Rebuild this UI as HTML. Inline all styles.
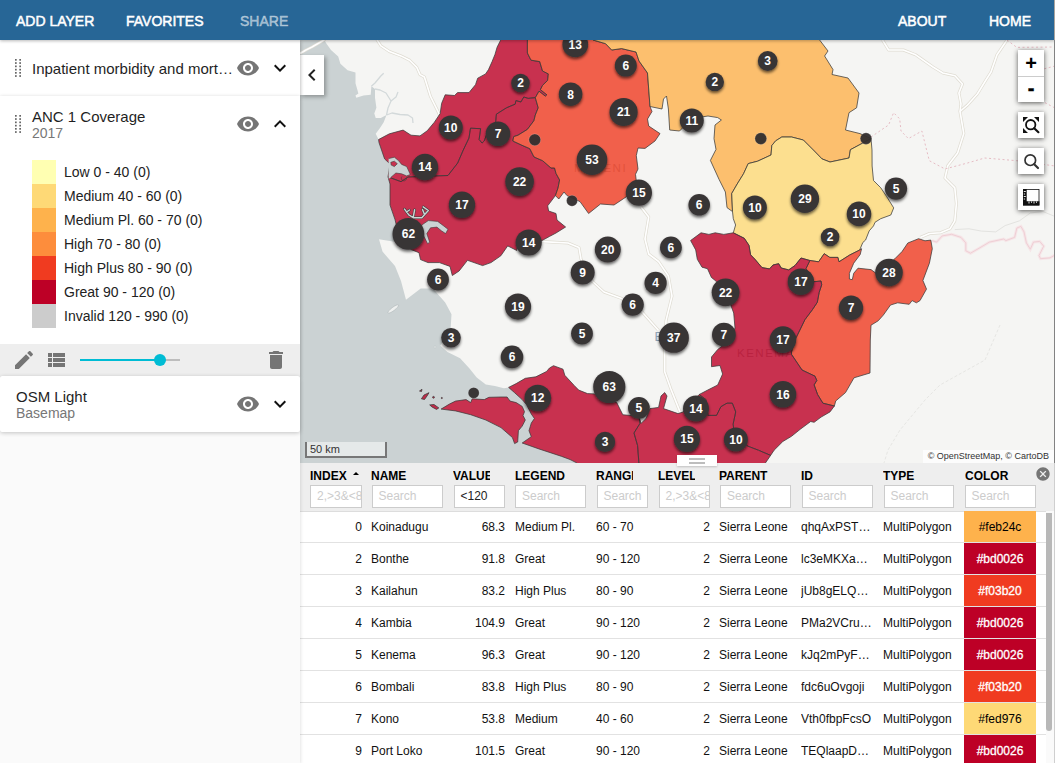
<!DOCTYPE html>
<html lang="en">
<head>
<meta charset="utf-8">
<title>Maps</title>
<style>
html,body{margin:0;padding:0}
body{width:1055px;height:763px;overflow:hidden;position:relative;background:#fafafa;font-family:"Liberation Sans",sans-serif;color:#212121}
#hdr{position:absolute;left:0;top:0;width:1055px;height:40px;background:#276696;z-index:30;box-shadow:0 1px 3px rgba(0,0,0,.28)}
#hdr span{position:absolute;top:0;line-height:42px;font-size:14px;color:#fff;white-space:nowrap;-webkit-text-stroke:.5px currentColor}
#panel{position:absolute;left:0;top:40px;width:300px;height:723px;background:#fafafa;z-index:20;box-shadow:0 1px 4px rgba(0,0,0,.16)}
.card{position:absolute;left:0;width:300px;background:#fff;box-shadow:0 1px 4px rgba(0,0,0,.22)}
.card .t{position:absolute;left:32px;font-size:15px;white-space:nowrap;color:#1f1f1f}
.card .s{position:absolute;left:32px;font-size:14px;color:#777;white-space:nowrap}
.ic{position:absolute;width:24px;height:24px}
.grip{position:absolute;left:15px;width:7px}
.grip i{position:absolute;width:2px;height:2px;background:#8a8a8a}
.lg{position:absolute;left:32px;width:24px;height:24px}
.lt{position:absolute;left:64px;font-size:14px;line-height:24px;white-space:nowrap;color:#222}
#tb{position:absolute;left:0;top:248px;width:300px;height:32px;background:#eee}
#toggle{position:absolute;left:300px;top:55px;width:24px;height:40px;background:#fff;z-index:19;box-shadow:2px 2px 4px rgba(0,0,0,.3)}
#mapwrap{position:absolute;left:300px;top:40px;width:755px;height:423px;overflow:hidden;background:#f5f5f3}
#map{position:absolute;left:0;top:0}
.lbar{position:absolute;left:718px;width:26px;background:#fff;box-shadow:0 1px 5px rgba(0,0,0,.65)}
.lbar b{position:absolute;left:0;width:26px;height:26px;line-height:26px;text-align:center;font:bold 20px "Liberation Sans",sans-serif;color:#000}
#scale{position:absolute;left:5px;top:402px;width:75px;height:14px;border:2px solid #777;border-top:none;background:rgba(255,255,255,.5);font-size:11px;line-height:14px;padding-left:3px;color:#333;box-sizing:content-box}
#attr{position:absolute;right:1px;top:410px;height:13px;padding:0 5px;background:rgba(255,255,255,.7);font-size:9px;line-height:13px;color:#333;white-space:nowrap}
#handle{position:absolute;left:677px;top:455px;width:40px;height:11px;background:#fff;z-index:12;box-shadow:0 1px 2px rgba(0,0,0,.2)}
#handle i{position:absolute;left:12px;width:16px;height:2px;background:#bdbdbd}
#dt{position:absolute;left:300px;top:463px;width:755px;height:300px;background:#fff;overflow:hidden;z-index:10}
#dth{position:absolute;left:0;top:0;width:755px;height:48px;background:#eee;border-bottom:1px solid #ddd}
.hl{position:absolute;top:6px;height:14px;line-height:14px;font-size:12px;font-weight:bold;color:#000;overflow:hidden;white-space:nowrap}
.sa{position:absolute;top:9px;width:0;height:0;border-left:3px solid transparent;border-right:3px solid transparent;border-bottom:3px solid #000}
.fi{position:absolute;top:22px;height:21px;box-sizing:content-box;border:1px solid #ccc;background:#fff;font-size:12px;line-height:21px;text-indent:6px;color:#222;overflow:hidden;white-space:nowrap;margin-left:0}
.fi{width:auto}
.fi.ph{color:#ccc}
.cls{position:absolute;left:735px;top:3px}
.tr{position:absolute;left:0;width:746px;height:31px;border-bottom:1px solid #e2e2e2;font-size:12px;line-height:33px;color:#111}
.c{position:absolute;top:0;height:31px;overflow:hidden;white-space:nowrap;text-overflow:ellipsis}
.c.r{text-align:right}
.cc{position:absolute;left:664px;top:0;width:72px;height:31px;text-align:center}
.cc.w{-webkit-text-stroke:.3px #fff}
.sbt{position:absolute;left:746px;top:48px;width:9px;height:252px;background:#fafafa}
.sb{position:absolute;left:746px;top:50px;width:6px;height:218px;background:#b8b8b8;border-radius:0 0 3px 3px}
#edge{position:absolute;left:1054px;top:0;width:1px;height:763px;background:linear-gradient(#a9a49e 0,#a9a49e 40px,#828282 40px,#828282 463px,#cfcfcf 463px);z-index:40}
</style>
</head>
<body>

<div id="hdr">
<span style="left:16px">ADD LAYER</span>
<span style="left:126px">FAVORITES</span>
<span style="left:240px;color:rgba(255,255,255,.5)">SHARE</span>
<span style="left:898px">ABOUT</span>
<span style="left:989px">HOME</span>
</div>

<div id="mapwrap">
<svg id="map" width="755" height="423" viewBox="300 40 755 423">
<defs><filter id="ms" x="-40%" y="-40%" width="180%" height="190%"><feGaussianBlur in="SourceAlpha" stdDeviation="1.8"/><feOffset dy="1.8"/><feComponentTransfer><feFuncA type="linear" slope="0.6"/></feComponentTransfer><feMerge><feMergeNode/><feMergeNode in="SourceGraphic"/></feMerge></filter></defs>
<rect x="300" y="40" width="755" height="423" fill="#f5f5f3"/>
<polygon points="300.0,40.0 324.5,40.0 326.0,42.9 331.0,50.0 338.2,56.6 340.4,63.8 347.6,70.3 355.5,72.5 355.5,83.3 358.4,93.4 355.5,95.5 356.3,97.7 363.5,95.5 370.7,94.8 371.4,86.2 375.0,89.0 375.0,97.7 376.4,107.8 374.3,113.6 375.7,117.9 380.8,117.9 386.5,115.0 383.7,122.2 380.0,128.0 375.7,133.8 378.6,139.5 379.0,142.6 384.6,158.9 390.0,164.0 388.0,176.9 390.0,184.0 390.0,205.0 395.0,219.6 400.0,230.0 396.0,242.0 379.0,239.3 382.5,251.6 395.0,266.0 401.0,281.0 406.0,299.7 420.7,288.6 433.0,288.6 434.9,290.7 445.2,302.5 451.5,314.3 450.7,327.6 440.4,345.7 447.5,352.0 460.1,358.3 469.5,368.5 476.7,377.6 485.8,384.4 494.9,385.9 504.0,388.2 508.6,387.4 514.6,392.7 522.2,399.6 526.8,404.9 531.3,414.0 534.4,418.5 531.3,423.1 529.0,430.7 531.3,436.7 522.2,443.0 538.9,448.9 561.7,456.4 570.0,459.5 577.0,463.0 300.0,463.0" fill="#cbd2d3"/>
<polygon points="441.1,409.1 449.4,404.1 455.5,401.1 466.1,399.6 470.7,402.6 472.2,398.8 484.3,399.6 488.9,397.3 501.0,397.0 507.1,397.0 510.1,401.1 516.2,402.6 522.2,406.4 524.5,411.7 523.0,415.5 525.3,420.0 522.2,426.1 518.4,430.7 517.7,442.0 514.6,443.6 512.4,437.5 501.0,427.6 485.8,420.0 470.7,414.7 455.5,410.9" fill="#f5f5f3"/>
<ellipse cx="393.2" cy="309" rx="6.6" ry="1.7" transform="rotate(-37 393.2 309)" fill="#eef0ef" stroke="#b3bbbc" stroke-width=".6"/>
<ellipse cx="435" cy="347" rx="1.4" ry=".9" fill="#eef0ef" stroke="#b3bbbc" stroke-width=".5"/>
<polyline points="377.2,30.0 377.2,40.0 380.8,45.8 389.4,51.5 401.0,55.9 409.6,60.2 416.8,67.4 420.0,74.6 424.4,77.0 430.6,96.7 438.0,111.5 441.0,118.0" fill="none" stroke="#dfdcd2" stroke-width="3" stroke-linejoin="round"/>
<polyline points="300.0,53.5 306.0,50.0 312.0,47.0 318.0,43.5 324.0,40.0 326.0,38.0" fill="none" stroke="#dfdcd2" stroke-width="3" stroke-linejoin="round"/>
<polyline points="882.5,40.0 888.6,50.0 903.4,50.0 915.7,54.8 933.0,67.0 942.8,73.0 955.0,75.7 962.5,84.0 958.9,93.0 961.0,104.0 960.0,111.5" fill="none" stroke="#dfdcd2" stroke-width="3" stroke-linejoin="round"/>
<polyline points="1007.0,40.0 997.0,54.8 991.0,72.0 984.7,82.0 977.4,94.0 967.5,105.0 960.0,111.5 963.8,133.6 957.6,153.0 947.8,165.7 945.0,178.0 947.0,180.0 954.8,187.9 956.4,203.6 954.8,220.9 950.0,228.8 940.6,232.7 929.6,233.5 920.2,237.4" fill="none" stroke="#dfdcd2" stroke-width="3" stroke-linejoin="round"/>
<polyline points="641.0,207.0 648.7,217.0 645.0,239.0 648.7,254.0 658.6,261.5 668.4,276.0 672.0,296.0 666.0,320.6 664.7,352.0 664.7,371.7 670.9,389.0 680.7,413.6" fill="none" stroke="#dfdcd2" stroke-width="3" stroke-linejoin="round"/>
<polyline points="542.6,241.6 568.0,243.0 579.0,247.6 581.0,259.0 592.0,281.0 604.0,292.0 621.6,298.4 641.0,310.7 658.6,330.5" fill="none" stroke="#dfdcd2" stroke-width="3" stroke-linejoin="round"/>
<polyline points="377.2,30.0 377.2,40.0 380.8,45.8 389.4,51.5 401.0,55.9 409.6,60.2 416.8,67.4 420.0,74.6 424.4,77.0 430.6,96.7 438.0,111.5 441.0,118.0" fill="none" stroke="#ffffff" stroke-width="1.6" stroke-linejoin="round"/>
<polyline points="300.0,53.5 306.0,50.0 312.0,47.0 318.0,43.5 324.0,40.0 326.0,38.0" fill="none" stroke="#ffffff" stroke-width="1.6" stroke-linejoin="round"/>
<polyline points="882.5,40.0 888.6,50.0 903.4,50.0 915.7,54.8 933.0,67.0 942.8,73.0 955.0,75.7 962.5,84.0 958.9,93.0 961.0,104.0 960.0,111.5" fill="none" stroke="#ffffff" stroke-width="1.6" stroke-linejoin="round"/>
<polyline points="1007.0,40.0 997.0,54.8 991.0,72.0 984.7,82.0 977.4,94.0 967.5,105.0 960.0,111.5 963.8,133.6 957.6,153.0 947.8,165.7 945.0,178.0 947.0,180.0 954.8,187.9 956.4,203.6 954.8,220.9 950.0,228.8 940.6,232.7 929.6,233.5 920.2,237.4" fill="none" stroke="#ffffff" stroke-width="1.6" stroke-linejoin="round"/>
<polyline points="641.0,207.0 648.7,217.0 645.0,239.0 648.7,254.0 658.6,261.5 668.4,276.0 672.0,296.0 666.0,320.6 664.7,352.0 664.7,371.7 670.9,389.0 680.7,413.6" fill="none" stroke="#ffffff" stroke-width="1.6" stroke-linejoin="round"/>
<polyline points="542.6,241.6 568.0,243.0 579.0,247.6 581.0,259.0 592.0,281.0 604.0,292.0 621.6,298.4 641.0,310.7 658.6,330.5" fill="none" stroke="#ffffff" stroke-width="1.6" stroke-linejoin="round"/>
<polyline points="871.0,137.0 888.6,125.0 893.6,112.7 899.7,118.9 901.0,131.0 908.4,138.6 921.9,131.0 925.6,146.0 929.3,160.7 945.0,169.0 967.5,163.0 984.7,158.0 1016.8,160.7 1055.0,166.0" fill="none" stroke="#e6bcc4" stroke-width="1" stroke-dasharray="2,2.5"/>
<polyline points="1007.0,40.0 1016.8,47.4 1055.0,47.0" fill="none" stroke="#e6bcc4" stroke-width="1" stroke-dasharray="2,2.5"/>
<polyline points="1055.0,66.0 1032.0,72.0 1040.0,100.0 1055.0,108.0" fill="none" stroke="#e6bcc4" stroke-width="1" stroke-dasharray="2,2.5"/>
<polyline points="932.0,240.6 936.7,242.1 942.2,235.9 951.6,234.3 961.0,237.4 965.8,242.9 965.8,250.8 970.5,253.2 980.0,247.7 989.4,242.1 1003.6,239.0 1005.9,240.6 1014.6,237.4 1016.9,228.0 1020.9,226.4 1024.0,231.9 1026.4,242.9 1030.3,249.2 1033.5,242.1 1039.7,241.4 1043.7,246.1 1039.0,255.5 1040.5,258.7 1050.0,257.9 1055.0,255.0" fill="none" stroke="#f6e6e8" stroke-width="3"/>
<polyline points="932.0,240.6 936.7,242.1 942.2,235.9 951.6,234.3 961.0,237.4 965.8,242.9 965.8,250.8 970.5,253.2 980.0,247.7 989.4,242.1 1003.6,239.0 1005.9,240.6 1014.6,237.4 1016.9,228.0 1020.9,226.4 1024.0,231.9 1026.4,242.9 1030.3,249.2 1033.5,242.1 1039.7,241.4 1043.7,246.1 1039.0,255.5 1040.5,258.7 1050.0,257.9 1055.0,255.0" fill="none" stroke="#efcfd5" stroke-width="1"/>
<polyline points="1000,325 985,360 940,385 925,400 900,430 888,450 884,463" fill="none" stroke="#e6e6e3" stroke-width="1" stroke-dasharray="3,2"/>
<polyline points="954.8,229.6 969,228.8 981.5,231.1 995.7,231.9 1005.1,225.6 1019.3,220.9 1030.3,213 1042.9,211.5 1055,216.5" fill="none" stroke="#e3e3e0" stroke-width="1"/>
<polyline points="371.4,86.2 375,83 380.8,76 383.7,73.2" fill="none" stroke="#d3d9da" stroke-width="1.3" stroke-linejoin="round"/>
<polyline points="375,89 380,90 386,93 391,101 388,108 386.5,115" fill="none" stroke="#d3d9da" stroke-width="1.3" stroke-linejoin="round"/>
<polyline points="386.5,115 392,113 400,114.5 408,115 412.5,118 413,123" fill="none" stroke="#d3d9da" stroke-width="1.3" stroke-linejoin="round"/>
<polyline points="391,101 396,97 398,92" fill="none" stroke="#d3d9da" stroke-width="1.3" stroke-linejoin="round"/>
<g font-family="Liberation Sans, sans-serif" fill="#a9a9a9" font-size="11.5" letter-spacing="1.5">
<text x="737" y="357">KENEMA</text>
<text x="574" y="172">MAKENI</text>
<text x="654.5" y="341" fill="#8fa3b5" font-size="12.5" letter-spacing="0">BO</text>
</g>
<g stroke="#3a3a3a" stroke-width="0.75" stroke-linejoin="round" fill-opacity="0.8">
<polygon points="378.6,139.5 389.4,133.8 403.1,130.1 411.0,135.2 420.0,135.9 427.2,130.8 434.4,122.2 440.2,113.5 441.6,103.4 445.2,94.8 454.6,95.5 457.5,92.6 469.0,92.6 475.5,84.7 477.7,78.2 485.6,73.9 488.5,69.6 492.1,61.6 495.0,54.4 497.1,47.2 500.7,40.0 503.0,30.0 525.0,30.0 527.4,40.0 527.4,53.0 531.0,60.2 539.7,61.6 542.5,71.0 548.3,73.9 547.6,80.4 542.5,85.4 540.4,89.7 546.9,94.8 545.4,96.2 539.0,91.2 535.3,97.7 528.1,98.4 523.8,97.0 520.9,102.0 515.9,100.6 515.2,104.2 506.5,107.8 496.4,114.2 495.7,122.2 487.0,133.6 484.2,141.0 482.0,143.1 479.1,139.5 480.6,128.7 470.5,128.2 469.0,138.0 463.3,150.0 457.7,163.0 448.0,175.5 408.0,177.0 401.0,181.7 388.0,176.9 390.0,164.0 384.6,158.9 379.0,142.6" fill="#bd0026"/>
<polygon points="401.0,181.7 408.0,177.0 448.0,175.5 457.7,163.0 463.3,150.0 469.0,138.0 470.5,128.2 480.6,128.7 479.1,139.5 482.0,143.1 484.2,141.0 487.0,133.6 495.7,122.2 496.4,114.2 506.5,107.8 515.2,104.2 515.9,100.6 520.9,102.0 523.8,97.0 528.1,98.4 535.3,97.7 538.2,107.8 535.3,115.0 533.9,120.7 527.4,129.4 518.0,135.2 513.7,136.6 512.8,141.0 522.0,145.3 529.8,148.7 534.0,157.0 542.6,160.7 551.0,168.0 554.5,168.0 556.0,173.4 559.6,180.0 558.0,188.0 555.4,195.6 547.7,205.8 548.6,211.0 556.0,213.5 557.0,220.0 565.6,227.0 556.0,233.0 549.4,236.5 541.7,240.7 517.0,248.0 516.8,250.5 507.7,245.9 500.8,255.8 491.0,262.6 482.6,265.6 467.5,260.3 459.1,271.0 452.3,275.5 450.0,266.4 439.4,262.6 428.0,262.6 420.5,259.6 419.0,252.7 411.4,249.7 405.0,244.0 398.0,232.0 395.0,219.6 390.0,205.0 390.0,184.0 388.0,176.9" fill="#bd0026"/>
<polygon points="527.4,40.0 525.0,30.0 591.0,30.0 593.0,40.0 605.6,43.7 611.7,50.0 621.6,48.6 636.0,52.0 639.0,61.0 647.5,73.0 648.7,89.0 650.0,106.5 652.0,111.5 647.5,119.0 648.7,126.0 660.0,133.6 655.0,141.0 645.0,148.4 638.0,148.0 636.3,155.6 638.0,169.0 635.5,174.3 636.3,181.0 633.0,190.0 626.0,197.0 614.0,205.0 600.5,204.0 588.6,213.5 580.0,201.6 567.0,195.6 564.0,192.0 558.8,199.0 555.4,195.6 558.0,188.0 559.6,180.0 556.0,173.4 554.5,168.0 551.0,168.0 542.6,160.7 534.0,157.0 529.8,148.7 522.0,145.3 512.8,141.0 513.7,136.6 518.0,135.2 527.4,129.4 533.9,120.7 535.3,115.0 538.2,107.8 535.3,97.7 539.0,91.2 545.4,96.2 546.9,94.8 540.4,89.7 542.5,85.4 547.6,80.4 548.3,73.9 542.5,71.0 539.7,61.6 531.0,60.2 527.4,53.0" fill="#f03b20"/>
<polygon points="593.0,40.0 591.0,30.0 815.0,30.0 819.6,40.0 828.0,51.0 824.6,56.0 833.0,69.6 832.0,74.5 848.0,78.0 859.0,93.0 856.6,107.8 849.0,112.7 845.5,130.0 860.0,133.6 871.0,138.6 850.4,149.7 849.0,158.0 830.0,162.0 822.0,158.9 814.3,151.0 803.3,140.0 791.6,137.0 781.8,137.0 775.7,140.8 771.8,145.5 771.0,155.0 757.6,161.2 748.2,163.6 743.5,173.8 737.2,184.0 731.7,193.5 732.5,211.6 727.0,207.6 725.4,192.0 719.0,179.3 710.4,160.4 716.0,149.4 714.0,138.6 715.0,125.0 721.4,120.0 717.7,117.6 708.0,116.0 695.0,118.0 683.0,127.5 679.5,131.0 669.7,130.0 668.4,109.0 666.5,96.0 663.5,99.0 662.0,109.0 650.0,106.5 648.7,89.0 647.5,73.0 639.0,61.0 636.0,52.0 621.6,48.6 611.7,50.0 605.6,43.7" fill="#feb24c"/>
<polygon points="871.0,138.6 872.0,150.0 872.1,166.0 873.5,180.5 880.7,187.7 886.5,196.3 893.7,207.9 890.8,215.0 880.7,218.7 875.0,222.3 873.5,225.9 869.2,230.9 865.6,240.0 862.8,242.5 859.7,250.0 849.7,255.0 839.0,261.8 837.9,257.4 829.8,257.4 824.2,253.7 818.6,261.8 809.9,260.5 801.0,258.0 795.0,265.5 788.7,269.9 781.2,268.0 778.7,263.7 773.0,265.0 769.5,268.9 762.0,267.6 754.7,259.0 750.6,254.8 749.0,245.4 744.3,238.3 733.3,232.8 735.6,225.0 733.3,218.7 732.5,211.6 731.7,193.5 737.2,184.0 743.5,173.8 748.2,163.6 757.6,161.2 771.0,155.0 771.8,145.5 775.7,140.8 781.8,137.0 791.6,137.0 803.3,140.0 814.3,151.0 822.0,158.9 830.0,162.0 849.0,158.0 850.4,149.7" fill="#fed976"/>
<polygon points="809.9,260.5 818.6,261.8 824.2,253.7 829.8,257.4 837.9,257.4 839.0,261.8 849.7,255.0 859.7,250.0 861.6,248.7 860.2,254.5 853.7,263.2 849.4,273.3 849.4,279.0 852.3,279.7 853.7,273.3 858.0,268.2 871.0,269.6 876.0,273.3 889.0,264.0 894.8,258.8 902.0,251.6 907.8,243.0 918.6,238.7 925.0,240.8 930.8,240.1 932.3,248.7 929.4,263.2 922.9,280.5 926.5,289.1 920.0,300.6 916.4,302.8 912.1,300.6 909.2,304.3 897.7,302.8 890.5,305.0 883.3,315.1 878.2,320.8 871.0,325.2 870.3,340.0 870.0,373.0 854.0,377.8 845.5,392.6 835.7,401.0 834.4,406.0 822.9,403.2 817.6,394.5 814.1,384.9 816.8,380.5 815.0,376.2 802.0,370.0 791.5,354.4 791.5,352.0 795.0,340.0 799.9,330.0 804.9,319.7 812.4,309.7 817.3,302.3 819.2,292.3 821.7,284.8 821.0,281.0 814.2,281.7 806.0,268.6" fill="#f03b20"/>
<polygon points="690.6,240.5 701.0,232.8 708.9,234.4 715.2,232.8 723.8,234.4 733.3,232.8 744.3,238.3 749.0,245.4 750.6,254.8 754.7,259.0 762.0,267.6 769.5,268.9 773.0,265.0 778.7,263.7 781.2,268.0 788.7,269.9 795.0,265.5 801.0,258.0 809.9,260.5 806.0,268.6 814.2,281.7 821.0,281.0 821.7,284.8 819.2,292.3 817.3,302.3 812.4,309.7 804.9,319.7 799.9,330.0 795.0,340.0 791.5,352.0 791.5,354.4 802.0,370.0 815.0,376.2 816.8,380.5 814.1,384.9 817.6,394.5 822.9,403.2 834.4,406.0 830.0,411.9 821.1,417.1 814.1,422.3 810.7,421.5 800.2,429.3 791.5,436.3 782.8,441.5 774.1,450.2 770.6,455.4 758.4,450.2 747.1,445.9 734.0,431.0 733.1,424.1 735.7,411.9 732.3,403.2 727.0,403.2 720.9,406.7 716.6,415.4 707.9,415.4 706.1,399.7 699.2,394.5 707.8,390.0 717.7,385.0 722.6,374.0 720.0,365.5 711.5,366.7 711.5,357.0 717.7,349.5 730.0,340.0 735.0,328.0 733.7,313.0 730.0,303.0 722.0,290.0 716.2,281.3 711.4,277.4 707.5,268.7 702.0,267.2 697.3,259.3 695.7,249.9" fill="#bd0026"/>
<polygon points="508.6,387.4 516.2,383.6 525.3,378.3 535.9,376.8 546.5,371.5 549.5,368.0 553.5,365.7 563.0,369.2 564.8,375.3 574.4,385.7 578.7,390.1 587.5,393.6 594.5,393.9 616.7,402.5 622.8,414.8 638.9,416.0 640.0,423.4 634.0,433.0 637.6,445.6 638.9,463.0 639.0,472.0 580.0,472.0 577.0,463.0 570.0,459.5 561.7,456.4 538.9,448.9 522.2,443.0 531.3,436.7 529.0,430.7 531.3,423.1 534.4,418.5 531.3,414.0 526.8,404.9 522.2,399.6 514.6,392.7" fill="#bd0026"/>
<polygon points="638.9,416.0 641.0,423.4 646.0,418.5 650.0,408.6 658.6,407.4 661.0,396.0 664.7,392.6 667.0,396.0 663.5,408.6 678.0,413.6 683.0,412.0 699.2,394.5 706.1,399.7 707.9,415.4 716.6,415.4 720.9,406.7 727.0,403.2 732.3,403.2 735.7,411.9 733.1,424.1 734.0,431.0 747.1,445.9 758.4,450.2 770.6,455.4 765.4,463.0 759.0,472.0 639.0,472.0 638.9,463.0 637.6,445.6 634.0,433.0 640.0,423.4" fill="#bd0026"/>
<polygon points="441.1,409.1 449.4,404.1 455.5,401.1 466.1,399.6 470.7,402.6 472.2,398.8 484.3,399.6 488.9,397.3 501.0,397.0 507.1,397.0 510.1,401.1 516.2,402.6 522.2,406.4 524.5,411.7 523.0,415.5 525.3,420.0 522.2,426.1 518.4,430.7 517.7,442.0 514.6,443.6 512.4,437.5 501.0,427.6 485.8,420.0 470.7,414.7 455.5,410.9" fill="#bd0026"/>
<polygon points="421.4,398.8 424,395 429,392.7 427,396 424.5,399.5" fill="#bd0026"/>
<polygon points="429.7,404.9 434,404.5 438.8,407.9 436.5,409.4 432,407" fill="#bd0026"/>
<polygon points="419.5,391 422,389.300 421.5,391.500" fill="#bd0026"/>
<circle cx="433.5" cy="397.300" r=".9" fill="#bd0026"/>
<circle cx="441.8" cy="398" r=".6" fill="#bd0026"/>
</g>
<g fill="#cbd2d3" stroke="#3a3a3a" stroke-width="0.6" stroke-linejoin="round">
<path d="M388.6 158.600L394.4 157.200L398.7 160.800L401.6 164.400L406.7 166.600L410.3 174.500L406.7 175.900L401.6 173.800L395.900 173L390.800 177.400L388.600 178.800Z" stroke="none"/>
<path d="M388.6 158.600L394.4 157.200L398.7 160.800L401.6 164.400L406.7 166.600L410.3 174.500L406.7 175.900L401.6 173.800L395.900 173L390.800 177.400" fill="none"/>
<path d="M421.8 225L428.3 220.600L437.700 221.400L443.400 225.700L448 229.300L445.600 233.600L441.300 230.700L436.900 227.100L430.500 227.800L426.800 233.600L429.700 242.200L427.600 243.700L424 236.500L421.800 230.700Z"/>
</g>
<path d="M390.800 162.300L394.400 161.200L397.300 163.700L394.400 166.600L391.200 165.100Z" fill="#c8314f" stroke="#3a3a3a" stroke-width=".6"/>
<path d="M402 176.500a2.600 2.600 0 1 0 4.500 1.500" fill="none" stroke="#3a3a3a" stroke-width=".6"/>
<g fill="none" stroke-linecap="round" stroke-linejoin="round">
<path d="M404.500 209.100L408.800 214.900L413.200 217.700L421.800 217.700L428.300 210.500L423.200 206.900M414.600 209.800L413.200 217.700M424.500 214.500L422.500 209.500M406.500 212L409.500 210" stroke="#3a3a3a" stroke-width="2.6"/>
<path d="M404.500 209.100L408.800 214.900L413.200 217.700L421.800 217.700L428.300 210.500L423.200 206.900M414.600 209.800L413.200 217.700M424.500 214.500L422.500 209.500M406.500 212L409.500 210" stroke="#cbd2d3" stroke-width="1.5"/>
</g>
<circle cx="534.8" cy="139.8" r="5.9" fill="#332f2f" fill-opacity=".96" stroke="rgba(255,255,255,.18)" stroke-width="1"/>
<circle cx="572.0" cy="200.7" r="5.5" fill="#332f2f" fill-opacity=".96" stroke="rgba(255,255,255,.18)" stroke-width="1"/>
<circle cx="760.8" cy="138.6" r="5.9" fill="#332f2f" fill-opacity=".96" stroke="rgba(255,255,255,.18)" stroke-width="1"/>
<circle cx="866.0" cy="138.6" r="5.8" fill="#332f2f" fill-opacity=".96" stroke="rgba(255,255,255,.18)" stroke-width="1"/>
<circle cx="473.7" cy="392.9" r="5.5" fill="#332f2f" fill-opacity=".96" stroke="rgba(255,255,255,.18)" stroke-width="1"/>
<g filter="url(#ms)">
<circle cx="575.3" cy="44.4" r="12.9" fill="#393536"/>
<circle cx="625.8" cy="65.6" r="11.0" fill="#393536"/>
<circle cx="570.6" cy="94.2" r="11.8" fill="#393536"/>
<circle cx="623.6" cy="112.0" r="14.1" fill="#393536"/>
<circle cx="592.0" cy="159.8" r="15.3" fill="#393536"/>
<circle cx="520.5" cy="83.0" r="9.3" fill="#393536"/>
<circle cx="450.8" cy="127.5" r="12.0" fill="#393536"/>
<circle cx="498.0" cy="133.8" r="12.3" fill="#393536"/>
<circle cx="425.0" cy="167.0" r="13.2" fill="#393536"/>
<circle cx="519.6" cy="181.6" r="14.3" fill="#393536"/>
<circle cx="462.0" cy="204.8" r="13.2" fill="#393536"/>
<circle cx="408.4" cy="233.9" r="15.9" fill="#393536"/>
<circle cx="528.7" cy="242.5" r="13.1" fill="#393536"/>
<circle cx="638.9" cy="192.7" r="13.1" fill="#393536"/>
<circle cx="767.7" cy="61.0" r="9.9" fill="#393536"/>
<circle cx="714.8" cy="81.9" r="9.2" fill="#393536"/>
<circle cx="691.8" cy="120.6" r="12.0" fill="#393536"/>
<circle cx="896.0" cy="188.6" r="11.1" fill="#393536"/>
<circle cx="699.2" cy="204.8" r="10.8" fill="#393536"/>
<circle cx="754.9" cy="207.6" r="12.0" fill="#393536"/>
<circle cx="804.9" cy="198.8" r="14.2" fill="#393536"/>
<circle cx="859.0" cy="213.9" r="12.3" fill="#393536"/>
<circle cx="830.1" cy="237.0" r="9.3" fill="#393536"/>
<circle cx="607.8" cy="249.6" r="13.0" fill="#393536"/>
<circle cx="670.9" cy="247.4" r="10.9" fill="#393536"/>
<circle cx="582.7" cy="272.6" r="12.0" fill="#393536"/>
<circle cx="655.6" cy="282.9" r="11.1" fill="#393536"/>
<circle cx="725.6" cy="292.3" r="13.9" fill="#393536"/>
<circle cx="632.7" cy="304.6" r="11.1" fill="#393536"/>
<circle cx="800.9" cy="281.7" r="13.2" fill="#393536"/>
<circle cx="889.0" cy="272.6" r="13.8" fill="#393536"/>
<circle cx="851.0" cy="307.8" r="12.2" fill="#393536"/>
<circle cx="438.0" cy="279.5" r="10.9" fill="#393536"/>
<circle cx="518.0" cy="306.6" r="13.1" fill="#393536"/>
<circle cx="582.0" cy="333.5" r="10.9" fill="#393536"/>
<circle cx="673.8" cy="337.7" r="15.1" fill="#393536"/>
<circle cx="723.9" cy="334.7" r="11.9" fill="#393536"/>
<circle cx="783.0" cy="339.6" r="13.3" fill="#393536"/>
<circle cx="451.0" cy="337.8" r="9.8" fill="#393536"/>
<circle cx="512.0" cy="356.9" r="11.3" fill="#393536"/>
<circle cx="609.3" cy="387.0" r="16.1" fill="#393536"/>
<circle cx="638.9" cy="407.9" r="10.9" fill="#393536"/>
<circle cx="696.0" cy="408.6" r="13.0" fill="#393536"/>
<circle cx="783.0" cy="394.3" r="13.3" fill="#393536"/>
<circle cx="537.8" cy="398.0" r="13.3" fill="#393536"/>
<circle cx="605.0" cy="441.9" r="10.2" fill="#393536"/>
<circle cx="686.9" cy="438.9" r="13.1" fill="#393536"/>
<circle cx="735.9" cy="439.5" r="12.0" fill="#393536"/>
</g>
<g font-family="Liberation Sans, sans-serif" font-weight="bold" font-size="12" fill="#fff" text-anchor="middle">
<text x="575.3" y="48.7">13</text>
<text x="625.8" y="69.9">6</text>
<text x="570.6" y="98.5">8</text>
<text x="623.6" y="116.3">21</text>
<text x="592.0" y="164.1">53</text>
<text x="520.5" y="87.3">2</text>
<text x="450.8" y="131.8">10</text>
<text x="498.0" y="138.1">7</text>
<text x="425.0" y="171.3">14</text>
<text x="519.6" y="185.9">22</text>
<text x="462.0" y="209.1">17</text>
<text x="408.4" y="238.2">62</text>
<text x="528.7" y="246.8">14</text>
<text x="638.9" y="197.0">15</text>
<text x="767.7" y="65.3">3</text>
<text x="714.8" y="86.2">2</text>
<text x="691.8" y="124.9">11</text>
<text x="896.0" y="192.9">5</text>
<text x="699.2" y="209.1">6</text>
<text x="754.9" y="211.9">10</text>
<text x="804.9" y="203.1">29</text>
<text x="859.0" y="218.2">10</text>
<text x="830.1" y="241.3">2</text>
<text x="607.8" y="253.9">20</text>
<text x="670.9" y="251.7">6</text>
<text x="582.7" y="276.9">9</text>
<text x="655.6" y="287.2">4</text>
<text x="725.6" y="296.6">22</text>
<text x="632.7" y="308.9">6</text>
<text x="800.9" y="286.0">17</text>
<text x="889.0" y="276.9">28</text>
<text x="851.0" y="312.1">7</text>
<text x="438.0" y="283.8">6</text>
<text x="518.0" y="310.9">19</text>
<text x="582.0" y="337.8">5</text>
<text x="673.8" y="342.0">37</text>
<text x="723.9" y="339.0">7</text>
<text x="783.0" y="343.9">17</text>
<text x="451.0" y="342.1">3</text>
<text x="512.0" y="361.2">6</text>
<text x="609.3" y="391.3">63</text>
<text x="638.9" y="412.2">5</text>
<text x="696.0" y="412.9">14</text>
<text x="783.0" y="398.6">16</text>
<text x="537.8" y="402.3">12</text>
<text x="605.0" y="446.2">3</text>
<text x="686.9" y="443.2">15</text>
<text x="735.9" y="443.8">10</text>
</g>
</svg>
<div class="lbar" style="top:10px;height:52px"><b style="top:0;line-height:27px">+</b><b style="top:26px;border-top:1px solid #ccc;height:25px;line-height:23px;-webkit-text-stroke:.4px #000">-</b></div>
<div class="lbar" style="top:72px;height:26px">
<svg width="26" height="26" viewBox="0 0 26 26" style="position:absolute;left:0;top:0"><path d="M5 5h5l-5 5zM21 5v5l-5-5zM5 21v-5l5 5z" fill="#111"/><circle cx="12.700" cy="12.700" r="4.700" fill="none" stroke="#111" stroke-width="1.800"/><path d="M16.200 16.200l4.200 4" stroke="#111" stroke-width="2.200" stroke-linecap="round"/></svg>
</div>
<div class="lbar" style="top:108px;height:26px">
<svg width="26" height="26" viewBox="0 0 26 26" style="position:absolute;left:0;top:0"><circle cx="12.300" cy="12.200" r="5.300" fill="none" stroke="#333" stroke-width="1.700"/><path d="M16.200 16.200l3.800 3.800" stroke="#333" stroke-width="2.200" stroke-linecap="round"/></svg>
</div>
<div class="lbar" style="top:144px;height:26px">
<svg width="26" height="26" viewBox="0 0 26 26" style="position:absolute;left:0;top:0"><rect x="5.400" y="5.400" width="15.600" height="15.600" fill="#fff" stroke="#111" stroke-width=".8"/><path d="M5 5h3.700v12.300H21.400V21.400H5z" fill="#111"/><path d="M11 17.500v2M13.500 17.500v1.300M16 17.500v2M18.500 17.500v1.300M5.800 7.500h2M5.800 10h1.300M5.800 12.500h2M5.800 15h1.300" stroke="#fff" stroke-width=".9"/></svg>
</div>
<div id="scale">50 km</div>
<div id="attr">© OpenStreetMap, © CartoDB</div>
</div>

<div id="toggle"><svg class="ic" style="left:0;top:8px" viewBox="0 0 24 24"><path fill="#222" d="M15.410 7.410L14 6l-6 6 6 6 1.410-1.410L10.830 12z"/></svg></div>

<div id="panel">
 <div class="card" style="top:0;height:56px">
  <svg class="grip" style="top:19px" width="7" height="19" viewBox="0 0 7 19" fill="#666"><rect x="0" y="0.0" width="1.700" height="1.700"/><rect x="4.300" y="0.0" width="1.700" height="1.700"/><rect x="0" y="3.2" width="1.700" height="1.700"/><rect x="4.300" y="3.2" width="1.700" height="1.700"/><rect x="0" y="6.5" width="1.700" height="1.700"/><rect x="4.300" y="6.5" width="1.700" height="1.700"/><rect x="0" y="9.8" width="1.700" height="1.700"/><rect x="4.300" y="9.8" width="1.700" height="1.700"/><rect x="0" y="13.0" width="1.700" height="1.700"/><rect x="4.300" y="13.0" width="1.700" height="1.700"/><rect x="0" y="16.2" width="1.700" height="1.700"/><rect x="4.300" y="16.2" width="1.700" height="1.700"/></svg>
  <div class="t" style="top:20px;line-height:17px">Inpatient morbidity and mort…</div>
  <svg class="ic" style="left:236px;top:16px" viewBox="0 0 24 24"><path fill="#757575" d="M12 4.500C7 4.500 2.730 7.610 1 12c1.730 4.390 6 7.500 11 7.500s9.270-3.110 11-7.500c-1.730-4.390-6-7.500-11-7.500zM12 17c-2.760 0-5-2.240-5-5s2.240-5 5-5 5 2.240 5 5-2.240 5-5 5zm0-8c-1.660 0-3 1.340-3 3s1.340 3 3 3 3-1.340 3-3-1.340-3-3-3z"/></svg>
  <svg class="ic" style="left:268px;top:15.500px" viewBox="0 0 24 24"><path fill="#111" d="M16.590 8.590L12 13.170 7.410 8.590 6 10l6 6 6-6z"/></svg>
 </div>
 <div class="card" style="top:56px;height:280px">
  <svg class="grip" style="top:19px" width="7" height="19" viewBox="0 0 7 19" fill="#666"><rect x="0" y="0.0" width="1.700" height="1.700"/><rect x="4.300" y="0.0" width="1.700" height="1.700"/><rect x="0" y="3.2" width="1.700" height="1.700"/><rect x="4.300" y="3.2" width="1.700" height="1.700"/><rect x="0" y="6.5" width="1.700" height="1.700"/><rect x="4.300" y="6.5" width="1.700" height="1.700"/><rect x="0" y="9.8" width="1.700" height="1.700"/><rect x="4.300" y="9.8" width="1.700" height="1.700"/><rect x="0" y="13.0" width="1.700" height="1.700"/><rect x="4.300" y="13.0" width="1.700" height="1.700"/><rect x="0" y="16.2" width="1.700" height="1.700"/><rect x="4.300" y="16.2" width="1.700" height="1.700"/></svg>
  <div class="t" style="top:12px;line-height:17px">ANC 1 Coverage</div>
  <div class="s" style="top:29px;line-height:16px">2017</div>
  <svg class="ic" style="left:236px;top:16px" viewBox="0 0 24 24"><path fill="#757575" d="M12 4.500C7 4.500 2.730 7.610 1 12c1.730 4.390 6 7.500 11 7.500s9.270-3.110 11-7.500c-1.730-4.390-6-7.500-11-7.500zM12 17c-2.760 0-5-2.240-5-5s2.240-5 5-5 5 2.240 5 5-2.240 5-5 5zm0-8c-1.660 0-3 1.340-3 3s1.340 3 3 3 3-1.340 3-3-1.340-3-3-3z"/></svg>
  <svg class="ic" style="left:268px;top:16px" viewBox="0 0 24 24"><path fill="#111" d="M12 8l-6 6 1.410 1.410L12 10.830l4.590 4.580L18 14z"/></svg>
  <div class="lg" style="top:64px;background:#ffffb2"></div><div class="lt" style="top:64px">Low 0 - 40 (0)</div>
  <div class="lg" style="top:88px;background:#fed976"></div><div class="lt" style="top:88px">Medium 40 - 60 (0)</div>
  <div class="lg" style="top:112px;background:#feb24c"></div><div class="lt" style="top:112px">Medium Pl. 60 - 70 (0)</div>
  <div class="lg" style="top:136px;background:#fd8d3c"></div><div class="lt" style="top:136px">High 70 - 80 (0)</div>
  <div class="lg" style="top:160px;background:#f03b20"></div><div class="lt" style="top:160px">High Plus 80 - 90 (0)</div>
  <div class="lg" style="top:184px;background:#bd0026"></div><div class="lt" style="top:184px">Great 90 - 120 (0)</div>
  <div class="lg" style="top:208px;background:#cccccc"></div><div class="lt" style="top:208px">Invalid 120 - 990 (0)</div>
  <div id="tb">
   <svg class="ic" style="left:12px;top:4px" viewBox="0 0 24 24"><path fill="#757575" d="M3 17.250V21h3.750L17.810 9.940l-3.750-3.750L3 17.250zM20.710 7.040c.390-.390.390-1.020 0-1.410l-2.340-2.340c-.390-.390-1.020-.390-1.410 0l-1.830 1.830 3.750 3.750 1.830-1.830z"/></svg>
   <svg class="ic" style="left:44px;top:4px" viewBox="0 0 24 24"><path fill="#757575" d="M4 14h4v-4H4v4zm0 5h4v-4H4v4zM4 9h4V5H4v4zm5 5h12v-4H9v4zm0 5h12v-4H9v4zM9 5v4h12V5H9z"/></svg>
   <div style="position:absolute;left:80px;top:15px;width:100px;height:2px;background:#bdbdbd"></div>
   <div style="position:absolute;left:80px;top:15px;width:80px;height:2px;background:#00bcd4"></div>
   <div style="position:absolute;left:154px;top:10px;width:12px;height:12px;border-radius:50%;background:#00bcd4"></div>
   <svg class="ic" style="left:264px;top:4px" viewBox="0 0 24 24"><path fill="#757575" d="M6 19c0 1.100.900 2 2 2h8c1.100 0 2-.900 2-2V7H6v12zM19 4h-3.500l-1-1h-5l-1 1H5v2h14V4z"/></svg>
  </div>
 </div>
 <div class="card" style="top:336px;height:56px;border-radius:2px">
  <div class="t" style="left:16px;top:12px;line-height:17px">OSM Light</div>
  <div class="s" style="left:16px;top:29px;line-height:16px">Basemap</div>
  <svg class="ic" style="left:236px;top:16px" viewBox="0 0 24 24"><path fill="#757575" d="M12 4.500C7 4.500 2.730 7.610 1 12c1.730 4.390 6 7.500 11 7.500s9.270-3.110 11-7.500c-1.730-4.390-6-7.500-11-7.500zM12 17c-2.760 0-5-2.240-5-5s2.240-5 5-5 5 2.240 5 5-2.240 5-5 5zm0-8c-1.660 0-3 1.340-3 3s1.340 3 3 3 3-1.340 3-3-1.340-3-3-3z"/></svg>
  <svg class="ic" style="left:268px;top:15.500px" viewBox="0 0 24 24"><path fill="#111" d="M16.590 8.590L12 13.170 7.410 8.590 6 10l6 6 6-6z"/></svg>
 </div>
</div>

<div id="handle"><i style="top:3px"></i><i style="top:7px"></i></div>

<div id="dt">
<div id="dth">
<div class="hl" style="left:10px;width:37px">INDEX</div>
<span class="sa" style="left:53px"></span>
<div class="fi ph" style="left:10px;width:49.5px">2,&gt;3&amp;&lt;8</div>
<div class="hl" style="left:71px;width:57px">NAME</div>
<div class="fi ph" style="left:71.5px;width:69px">Search</div>
<div class="hl" style="left:153px;width:37px">VALUE</div>
<div class="fi" style="left:153.5px;width:49px">&lt;120</div>
<div class="hl" style="left:215px;width:57px">LEGEND</div>
<div class="fi ph" style="left:215px;width:69px">Search</div>
<div class="hl" style="left:296px;width:37px">RANGE</div>
<div class="fi ph" style="left:296.5px;width:49px">Search</div>
<div class="hl" style="left:358px;width:37px">LEVEL</div>
<div class="fi ph" style="left:358.5px;width:49px">2,&gt;3&amp;&lt;8</div>
<div class="hl" style="left:419px;width:57px">PARENT</div>
<div class="fi ph" style="left:420px;width:68.5px">Search</div>
<div class="hl" style="left:501px;width:57px">ID</div>
<div class="fi ph" style="left:501.5px;width:69px">Search</div>
<div class="hl" style="left:583px;width:57px">TYPE</div>
<div class="fi ph" style="left:583.5px;width:68.5px">Search</div>
<div class="hl" style="left:665px;width:57px">COLOR</div>
<div class="fi ph" style="left:664.5px;width:69px">Search</div>
<svg class="cls" width="16" height="16" viewBox="0 0 24 24"><path fill="#757575" d="M12 2C6.47 2 2 6.47 2 12s4.470 10 10 10 10-4.470 10-10S17.530 2 12 2zm5 13.590L15.590 17 12 13.410 8.410 17 7 15.590 10.590 12 7 8.410 8.410 7 12 10.590 15.590 7 17 8.410 13.410 12 17 15.590z"/></svg>
</div>
<div class="tr" style="top:48px">
<span class="c r" style="left:10px;width:52px">0</span>
<span class="c" style="left:71px;width:72px">Koinadugu</span>
<span class="c r" style="left:153px;width:52px">68.3</span>
<span class="c" style="left:215px;width:72px">Medium Pl.</span>
<span class="c" style="left:296px;width:52px">60 - 70</span>
<span class="c r" style="left:358px;width:52px">2</span>
<span class="c" style="left:419px;width:72px">Sierra Leone</span>
<span class="c" style="left:501px;width:72px">qhqAxPSTUXp</span>
<span class="c" style="left:583px;width:72px">MultiPolygon</span>
<span class="cc" style="background:#feb24c;color:#000">#feb24c</span>
</div>
<div class="tr" style="top:80px">
<span class="c r" style="left:10px;width:52px">2</span>
<span class="c" style="left:71px;width:72px">Bonthe</span>
<span class="c r" style="left:153px;width:52px">91.8</span>
<span class="c" style="left:215px;width:72px">Great</span>
<span class="c" style="left:296px;width:52px">90 - 120</span>
<span class="c r" style="left:358px;width:52px">2</span>
<span class="c" style="left:419px;width:72px">Sierra Leone</span>
<span class="c" style="left:501px;width:72px">lc3eMKXaEfw</span>
<span class="c" style="left:583px;width:72px">MultiPolygon</span>
<span class="cc w" style="background:#bd0026;color:#fff">#bd0026</span>
</div>
<div class="tr" style="top:112px">
<span class="c r" style="left:10px;width:52px">3</span>
<span class="c" style="left:71px;width:72px">Kailahun</span>
<span class="c r" style="left:153px;width:52px">83.2</span>
<span class="c" style="left:215px;width:72px">High Plus</span>
<span class="c" style="left:296px;width:52px">80 - 90</span>
<span class="c r" style="left:358px;width:52px">2</span>
<span class="c" style="left:419px;width:72px">Sierra Leone</span>
<span class="c" style="left:501px;width:72px">jUb8gELQApl</span>
<span class="c" style="left:583px;width:72px">MultiPolygon</span>
<span class="cc w" style="background:#f03b20;color:#fff">#f03b20</span>
</div>
<div class="tr" style="top:144px">
<span class="c r" style="left:10px;width:52px">4</span>
<span class="c" style="left:71px;width:72px">Kambia</span>
<span class="c r" style="left:153px;width:52px">104.9</span>
<span class="c" style="left:215px;width:72px">Great</span>
<span class="c" style="left:296px;width:52px">90 - 120</span>
<span class="c r" style="left:358px;width:52px">2</span>
<span class="c" style="left:419px;width:72px">Sierra Leone</span>
<span class="c" style="left:501px;width:72px">PMa2VCrupOd</span>
<span class="c" style="left:583px;width:72px">MultiPolygon</span>
<span class="cc w" style="background:#bd0026;color:#fff">#bd0026</span>
</div>
<div class="tr" style="top:176px">
<span class="c r" style="left:10px;width:52px">5</span>
<span class="c" style="left:71px;width:72px">Kenema</span>
<span class="c r" style="left:153px;width:52px">96.3</span>
<span class="c" style="left:215px;width:72px">Great</span>
<span class="c" style="left:296px;width:52px">90 - 120</span>
<span class="c r" style="left:358px;width:52px">2</span>
<span class="c" style="left:419px;width:72px">Sierra Leone</span>
<span class="c" style="left:501px;width:72px">kJq2mPyFEHo</span>
<span class="c" style="left:583px;width:72px">MultiPolygon</span>
<span class="cc w" style="background:#bd0026;color:#fff">#bd0026</span>
</div>
<div class="tr" style="top:208px">
<span class="c r" style="left:10px;width:52px">6</span>
<span class="c" style="left:71px;width:72px">Bombali</span>
<span class="c r" style="left:153px;width:52px">83.8</span>
<span class="c" style="left:215px;width:72px">High Plus</span>
<span class="c" style="left:296px;width:52px">80 - 90</span>
<span class="c r" style="left:358px;width:52px">2</span>
<span class="c" style="left:419px;width:72px">Sierra Leone</span>
<span class="c" style="left:501px;width:72px">fdc6uOvgoji</span>
<span class="c" style="left:583px;width:72px">MultiPolygon</span>
<span class="cc w" style="background:#f03b20;color:#fff">#f03b20</span>
</div>
<div class="tr" style="top:240px">
<span class="c r" style="left:10px;width:52px">7</span>
<span class="c" style="left:71px;width:72px">Kono</span>
<span class="c r" style="left:153px;width:52px">53.8</span>
<span class="c" style="left:215px;width:72px">Medium</span>
<span class="c" style="left:296px;width:52px">40 - 60</span>
<span class="c r" style="left:358px;width:52px">2</span>
<span class="c" style="left:419px;width:72px">Sierra Leone</span>
<span class="c" style="left:501px;width:72px">Vth0fbpFcsO</span>
<span class="c" style="left:583px;width:72px">MultiPolygon</span>
<span class="cc" style="background:#fed976;color:#000">#fed976</span>
</div>
<div class="tr" style="top:272px">
<span class="c r" style="left:10px;width:52px">9</span>
<span class="c" style="left:71px;width:72px">Port Loko</span>
<span class="c r" style="left:153px;width:52px">101.5</span>
<span class="c" style="left:215px;width:72px">Great</span>
<span class="c" style="left:296px;width:52px">90 - 120</span>
<span class="c r" style="left:358px;width:52px">2</span>
<span class="c" style="left:419px;width:72px">Sierra Leone</span>
<span class="c" style="left:501px;width:72px">TEQlaapDQoK</span>
<span class="c" style="left:583px;width:72px">MultiPolygon</span>
<span class="cc w" style="background:#bd0026;color:#fff">#bd0026</span>
</div>
<div class="sbt"></div><div class="sb"></div>
</div>

<div id="edge"></div>
</body>
</html>
